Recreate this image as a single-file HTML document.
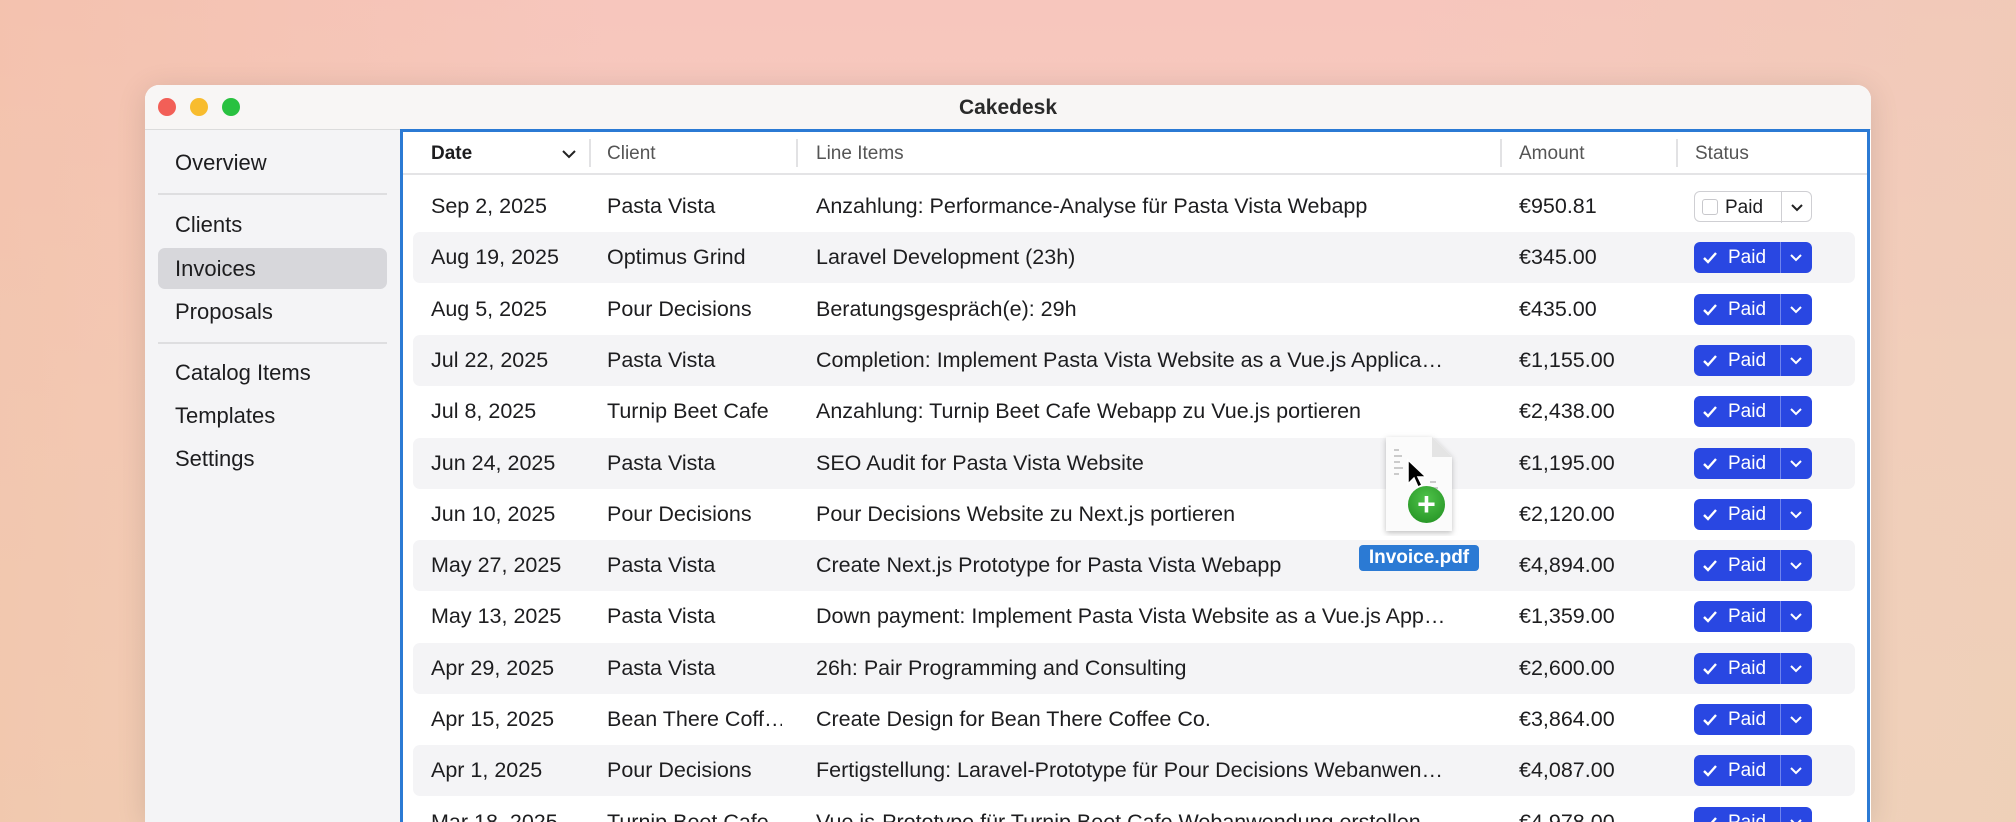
<!DOCTYPE html>
<html><head><meta charset="utf-8"><style>
*{margin:0;padding:0;box-sizing:border-box}
html{background:#f4cfbf;width:2016px;height:822px;overflow:hidden}
body{width:2016px;height:822px;overflow:hidden;position:relative;font-family:"Liberation Sans",sans-serif;
background:linear-gradient(180deg,#f7c6bd 0%,#f5cfbf 50%,#f2d3bd 100%);}
.bgl{position:absolute;inset:0;background:linear-gradient(90deg,rgba(240,190,160,.5),rgba(0,0,0,0) 30%,rgba(0,0,0,0) 70%,rgba(235,205,180,.5));}
.win{position:absolute;left:145px;top:85px;width:1726px;height:737px;background:#fff;border-radius:14px 14px 0 0;overflow:hidden;box-shadow:0 4px 30px rgba(0,0,0,.12)}
.tb{position:absolute;left:0;top:0;right:0;height:45px;background:#f8f6f5;border-bottom:1px solid #dcdcdc}
.tl{position:absolute;top:13px;width:18px;height:18px;border-radius:50%}
.title{position:absolute;left:0;right:0;top:11px;text-align:center;font-weight:bold;font-size:21px;color:#2a2a2a}
.side{position:absolute;left:0;top:45px;width:257px;bottom:0;background:#f4f4f6}
.si{position:absolute;left:30px;font-size:22px;color:#1d1d1f}
.sep{position:absolute;left:13px;width:229px;height:2px;background:#dedee0}
.sel{position:absolute;left:13px;width:229px;height:41px;background:#d7d7db;border-radius:7px}
.cont{position:absolute;left:255px;top:44px;width:1470px;bottom:-5px;border:3px solid #2b7ad4;background:#fff}
.hd{position:absolute;left:0;right:0;top:0;height:43px;border-bottom:2px solid #e4e4e6}
.ht{position:absolute;top:11px;font-size:19px;color:#555}
.hs{position:absolute;top:7px;width:2px;height:28px;background:#e2e2e4}
.row{position:absolute;left:10px;width:1442px;height:51px;border-radius:7px}
.row.s{background:#f4f4f6}
.c{position:absolute;top:13px;font-size:21.5px;color:#1d1d1f;white-space:nowrap}
.li{width:632px;overflow:hidden;text-overflow:ellipsis}
.btn{position:absolute;left:1281px;top:10px;width:118px;height:31px;border-radius:6px;background:#2947e2;color:#fff;font-size:19px}
.btn .dv{position:absolute;left:86px;top:0;width:1px;height:31px;background:#6f84ee}
.btn .tx{position:absolute;left:14px;top:5px}
.btn svg{position:absolute}
.btn.w{background:#fff;border:1.5px solid #cfcfd3;color:#1d1d1f}
.btn.w .dv{background:#cfcfd3}
</style></head><body><div class="bgl"></div>
<div class="win">
<div class="tb"><div class="tl" style="left:13px;background:#f25f57"></div><div class="tl" style="left:45px;background:#f8bc2e"></div><div class="tl" style="left:77px;background:#29c140"></div><div class="title">Cakedesk</div></div>
<div class="side">
<div class="si" style="top:20px">Overview</div>
<div class="sep" style="top:63px"></div>
<div class="si" style="top:82px">Clients</div>
<div class="sel" style="top:118px"></div>
<div class="si" style="top:126px">Invoices</div>
<div class="si" style="top:169px">Proposals</div>
<div class="sep" style="top:212px"></div>
<div class="si" style="top:230px">Catalog Items</div>
<div class="si" style="top:273px">Templates</div>
<div class="si" style="top:316px">Settings</div>
</div>
<div class="cont">
<div class="hd">
<div class="ht" style="left:28px;color:#1d1d1f;font-weight:bold">Date</div>
<svg style="position:absolute;left:158px;top:16px" width="16" height="12" viewBox="0 0 16 12"><path d="M2 3l6 6 6-6" fill="none" stroke="#222" stroke-width="2"/></svg>
<div class="hs" style="left:186px"></div>
<div class="ht" style="left:204px">Client</div>
<div class="hs" style="left:393px"></div>
<div class="ht" style="left:413px">Line Items</div>
<div class="hs" style="left:1097px"></div>
<div class="ht" style="left:1116px">Amount</div>
<div class="hs" style="left:1273px"></div>
<div class="ht" style="left:1292px">Status</div>
</div>
<div id="rows"></div>
</div>
</div>
<svg style="position:absolute;left:1380px;top:432px" width="80" height="104" viewBox="0 0 80 104">
<defs><filter id="sh" x="-20%" y="-20%" width="140%" height="140%"><feDropShadow dx="0" dy="2" stdDeviation="3" flood-opacity=".25"/></filter></defs>
<path d="M6 5h46l20 20v74H6z" fill="#fbfbfb" filter="url(#sh)"/>
<path d="M52 5v20h20" fill="#e4e4e4"/>
<g stroke="#bbb" stroke-width="1.5"><path d="M14 18h5M14 24h8M14 30h6M14 36h9M14 42h5M50 50h6M50 56h8M50 62h5"/></g>
</svg>
<div style="position:absolute;left:1408px;top:486px;width:37px;height:37px;border-radius:50%;background:radial-gradient(circle at 50% 35%,#4fc34a,#1f8d1f);color:#fff;font-weight:bold;font-size:32px;line-height:36px;text-align:center">+</div>
<svg style="position:absolute;left:1406px;top:458px" width="22" height="32" viewBox="0 0 22 32"><path d="M2 2v24l6-6 4 9 4-2-4-8h8z" fill="#000" stroke="#fff" stroke-width="1.5"/></svg>
<div style="position:absolute;left:1359px;top:545px;width:120px;height:26px;background:#2b7ad4;border-radius:4px;color:#fff;font-weight:bold;font-size:19px;text-align:center;line-height:26px">Invoice.pdf</div>
<script>
var d=[["Sep 2, 2025","Pasta Vista","Anzahlung: Performance-Analyse für Pasta Vista Webapp","€950.81"],
["Aug 19, 2025","Optimus Grind","Laravel Development (23h)","€345.00"],
["Aug 5, 2025","Pour Decisions","Beratungsgespräch(e): 29h","€435.00"],
["Jul 22, 2025","Pasta Vista","Completion: Implement Pasta Vista Website as a Vue.js Application","€1,155.00"],
["Jul 8, 2025","Turnip Beet Cafe","Anzahlung: Turnip Beet Cafe Webapp zu Vue.js portieren","€2,438.00"],
["Jun 24, 2025","Pasta Vista","SEO Audit for Pasta Vista Website","€1,195.00"],
["Jun 10, 2025","Pour Decisions","Pour Decisions Website zu Next.js portieren","€2,120.00"],
["May 27, 2025","Pasta Vista","Create Next.js Prototype for Pasta Vista Webapp","€4,894.00"],
["May 13, 2025","Pasta Vista","Down payment: Implement Pasta Vista Website as a Vue.js Application","€1,359.00"],
["Apr 29, 2025","Pasta Vista","26h: Pair Programming and Consulting","€2,600.00"],
["Apr 15, 2025","Bean There Coff…","Create Design for Bean There Coffee Co.","€3,864.00"],
["Apr 1, 2025","Pour Decisions","Fertigstellung: Laravel-Prototype für Pour Decisions Webanwendung","€4,087.00"],
["Mar 18, 2025","Turnip Beet Cafe","Vue.js-Prototype für Turnip Beet Cafe Webanwendung erstellen","€4,978.00"]];
var h="";
d.forEach(function(r,i){
var top=49+i*51.3;
var chk=i==0?'<div style="position:absolute;left:7px;top:7px;width:16px;height:16px;border:1.5px solid #c8c8cc;border-radius:3px"></div>':'<svg style="left:8px;top:9px" width="16" height="14" viewBox="0 0 16 14"><path d="M2 7l4 4 8-9" fill="none" stroke="#fff" stroke-width="2.4"/></svg>';
var cs=i==0?'#222':'#fff';
h+='<div class="row'+(i%2?' s':'')+'" style="top:'+top+'px">'+
'<div class="c" style="left:18px">'+r[0]+'</div><div class="c" style="left:194px;width:175px;overflow:hidden;text-overflow:clip">'+r[1]+'</div>'+
'<div class="c li" style="left:403px">'+r[2]+'</div><div class="c" style="left:1106px">'+r[3]+'</div>'+
'<div class="btn'+(i==0?' w':'')+'">'+chk+'<div class="tx" style="left:'+(i==0?30:34)+'px">Paid</div><div class="dv"></div>'+
'<svg style="left:94px;top:10px" width="16" height="12" viewBox="0 0 16 12"><path d="M3 3l5 5 5-5" fill="none" stroke="'+cs+'" stroke-width="2"/></svg></div></div>';
});
document.getElementById("rows").innerHTML=h;
</script>
</body></html>
